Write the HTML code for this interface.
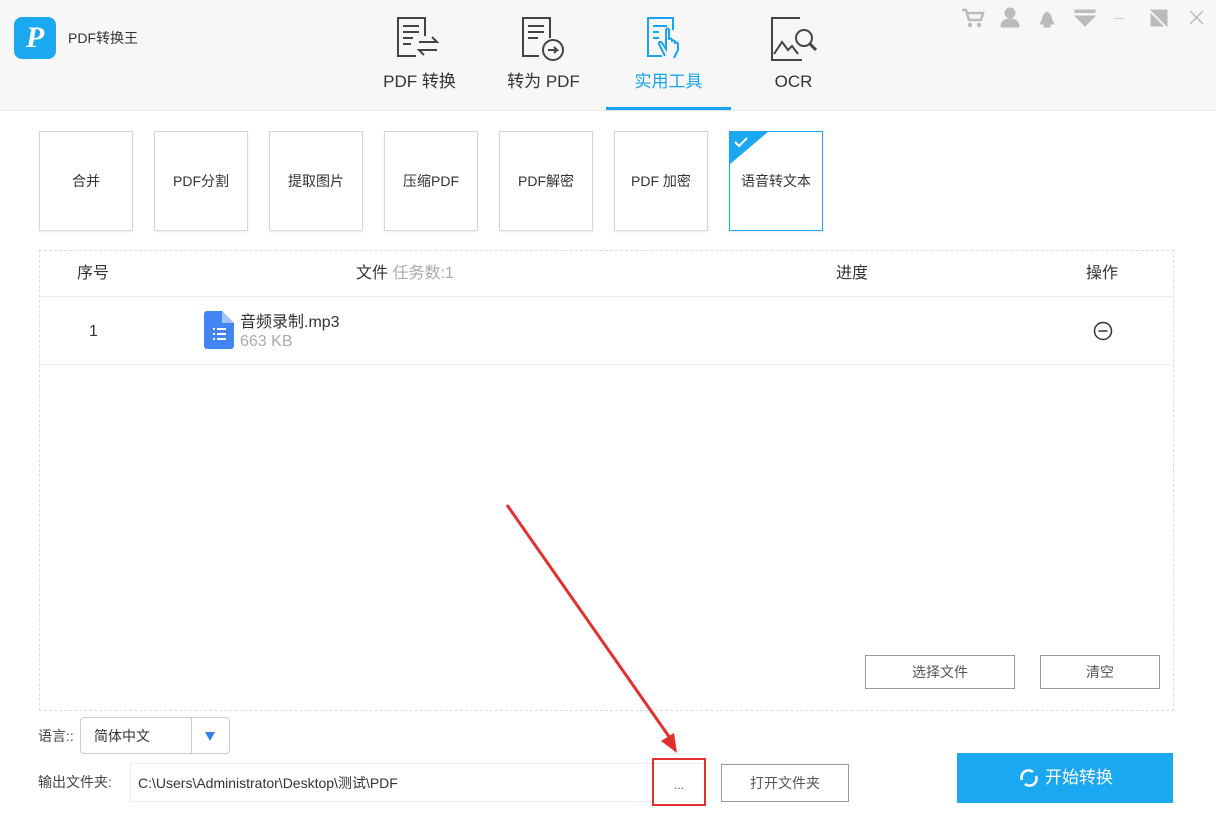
<!DOCTYPE html>
<html><head><meta charset="utf-8"><style>
*{margin:0;padding:0;box-sizing:border-box}
body{width:1216px;height:815px;background:#fff;font-family:"Liberation Sans","Noto Sans CJK SC",sans-serif;position:relative;overflow:hidden;color:#333;line-height:1.2}
.a{position:absolute}
.hdr{left:0;top:0;width:1216px;height:111px;background:#f7f7f7;border-bottom:1px solid #e8e8e8}
.tab{font-size:17px;color:#333;text-align:center;width:125px;top:72px}
.tool{top:131px;width:94px;height:100px;border:1px solid #d6d6d6;background:#fff;font-size:14px;color:#333;display:flex;align-items:center;justify-content:center;box-shadow:0 1px 2px rgba(0,0,0,.08)}
.th{top:264px;font-size:16px;color:#333}
.btn{border:1px solid #999;background:#fff;font-size:14px;color:#555;display:flex;align-items:center;justify-content:center}
</style></head><body>
<div class="a hdr"></div>
<div class="a" style="left:14px;top:17px;width:42px;height:42px;border-radius:8px;background:#1aa8f0;color:#fff;font:italic bold 30px 'Liberation Serif',serif;text-align:center;line-height:42px">P</div>
<div class="a" style="left:68px;top:30px;font-size:14px;color:#333">PDF转换王</div>
<svg class="a" style="left:395px;top:16px" width="48" height="44" viewBox="0 0 48 44" fill="none" stroke="#444" stroke-width="2"><path d="M30 20V2H3v38h18"/><path d="M8 10h16M8 16h16M8 22h10M8 28h8"/><path d="M24 26h18l-5-5M42 34H24l5 5"/></svg>
<svg class="a" style="left:520px;top:16px" width="48" height="46" viewBox="0 0 48 46" fill="none" stroke="#444" stroke-width="2"><path d="M30 22V2H3v38h16"/><path d="M8 10h16M8 16h16M8 22h10"/><circle cx="33" cy="34" r="10"/><path d="M28 34h9l-3-3M37 34l-3 3"/></svg>
<svg class="a" style="left:645px;top:16px" width="48" height="44" viewBox="0 0 48 44" fill="none" stroke="#1aa3f0" stroke-width="2"><path d="M28 14V2H3v38h14"/><path d="M8 10h14M8 16h6M8 22h6"/><path d="M20 40l-6-12c-1-2 2-3 3-1l4 6V14c0-2 3-2 3 0v10c0-2 3-2 3 0v2c0-2 3-2 3 0v2c0-2 3-2 3 0v6l-4 8"/></svg>
<svg class="a" style="left:770px;top:16px" width="48" height="46" viewBox="0 0 48 46" fill="none" stroke="#444" stroke-width="2"><path d="M30 2H2v42h30"/><path d="M4 38l8-12 6 8 4-4 6 8"/><circle cx="34" cy="22" r="8"/><path d="M40 28l6 6" stroke-width="3"/></svg>
<div class="a tab" style="left:357px">PDF 转换</div>
<div class="a tab" style="left:481px">转为 PDF</div>
<div class="a tab" style="left:606px;color:#1aa3f0">实用工具</div>
<div class="a tab" style="left:731px">OCR</div>
<div class="a" style="left:606px;top:107px;width:125px;height:3px;background:#1aa3f0"></div>
<svg class="a" style="left:960px;top:6px" width="250" height="24" viewBox="0 0 250 24" fill="#bbb" stroke="#bbb"><path d="M2 4h4l3 10h12l2-7H7" fill="none" stroke-width="2.5"/><circle cx="10" cy="19" r="1.8"/><circle cx="19" cy="19" r="1.8"/><circle cx="50" cy="7" r="5"/><path d="M41 21c0-6 4-8 9-8s9 2 9 8z"/><path d="M80 18c3-3 2-10 7-12 5 2 4 9 7 12z"/><rect x="84" y="19" width="6" height="2"/><rect x="115" y="4" width="20" height="2.5"/><path d="M115 10h20l-10 10z"/><rect x="154" y="12" width="10" height="1" stroke="none" fill="#ccc"/><path d="M191 4h16v16z"/><path d="M191 8l12 12h-12z"/><path d="M230 5l13 13M243 5l-13 13" fill="none" stroke-width="1.5"/></svg>
<div class="a tool" style="left:39px">合并</div>
<div class="a tool" style="left:154px">PDF分割</div>
<div class="a tool" style="left:269px">提取图片</div>
<div class="a tool" style="left:384px">压缩PDF</div>
<div class="a tool" style="left:499px">PDF解密</div>
<div class="a tool" style="left:614px">PDF 加密</div>
<div class="a tool" style="left:729px;border-color:#1aa8f0">语音转文本</div>
<svg class="a" style="left:729px;top:131px" width="40" height="34"><path d="M0 0h40L0 34z" fill="#1aa8f0"/><path d="M6 11l4 4 8-8" stroke="#fff" stroke-width="2" fill="none"/></svg>
<div class="a" style="left:39px;top:250px;width:1135px;height:461px;border:1px dashed #ddd"></div>
<div class="a" style="left:40px;top:296px;width:1133px;border-top:1px solid #eee"></div>
<div class="a" style="left:40px;top:364px;width:1133px;border-top:1px solid #eee"></div>
<div class="a th" style="left:77px">序号</div>
<div class="a th" style="left:356px">文件 <span style="color:#aaa">任务数:1</span></div>
<div class="a th" style="left:836px">进度</div>
<div class="a th" style="left:1086px">操作</div>
<div class="a" style="left:89px;top:322px;font-size:16px">1</div>
<svg class="a" style="left:204px;top:311px" width="30" height="38"><path d="M0 3a3 3 0 0 1 3-3h15l12 12v23a3 3 0 0 1-3 3H3a3 3 0 0 1-3-3z" fill="#4285f4"/><path d="M18 0v12h12z" fill="#a1c2fa"/><g fill="#fff"><rect x="9" y="17" width="2" height="2"/><rect x="13" y="17" width="9" height="2"/><rect x="9" y="22" width="2" height="2"/><rect x="13" y="22" width="9" height="2"/><rect x="9" y="27" width="2" height="2"/><rect x="13" y="27" width="9" height="2"/></g></svg>
<div class="a" style="left:240px;top:313px;font-size:16px;line-height:19px;color:#333">音频录制.mp3</div>
<div class="a" style="left:240px;top:332px;font-size:16px;line-height:19px;color:#aaa">663 KB</div>
<svg class="a" style="left:1093px;top:321px" width="20" height="20"><circle cx="10" cy="10" r="8.5" fill="none" stroke="#333" stroke-width="1.5"/><path d="M5.5 10h9" stroke="#333" stroke-width="1.5"/></svg>
<div class="a btn" style="left:865px;top:655px;width:150px;height:34px">选择文件</div>
<div class="a btn" style="left:1040px;top:655px;width:120px;height:34px">清空</div>
<div class="a" style="left:38px;top:728px;font-size:14px;color:#444">语言::</div>
<div class="a" style="left:80px;top:717px;width:150px;height:37px;border:1px solid #ccc;border-radius:4px;font-size:14px;padding:10px 0 0 13px;color:#333">简体中文</div>
<div class="a" style="left:191px;top:718px;height:35px;border-left:1px solid #ccc"></div>
<svg class="a" style="left:204px;top:731px" width="12" height="10"><path d="M1 1h10L6 10z" fill="#3a7ce8"/></svg>
<div class="a" style="left:38px;top:774px;font-size:14px;color:#444">输出文件夹:</div>
<div class="a" style="left:130px;top:763px;width:575px;height:39px;border:1px solid #eee;font-size:14px;padding:11px 0 0 7px;color:#333">C:\Users\Administrator\Desktop\测试\PDF</div>
<div class="a" style="left:652px;top:758px;width:54px;height:48px;border:2px solid #e3302f;font-size:12px;text-align:center;padding-top:18px;color:#555">...</div>
<div class="a btn" style="left:721px;top:764px;width:128px;height:38px">打开文件夹</div>
<div class="a" style="left:957px;top:753px;width:216px;height:50px;background:#1aa8f0;color:#fff;font-size:17px;display:flex;align-items:center;justify-content:center"><svg width="24" height="24" style="margin-right:4px"><path d="M5 14a7 7 0 0 1 11-8M19 10a7 7 0 0 1-11 8" fill="none" stroke="#fff" stroke-width="2.5"/></svg>开始转换</div>
<svg class="a" style="left:0;top:0" width="1216" height="815"><path d="M507 505L670 738" stroke="#e3302f" stroke-width="3"/><path d="M677 753l-16-12 13-8z" fill="#e3302f"/></svg>
</body></html>
